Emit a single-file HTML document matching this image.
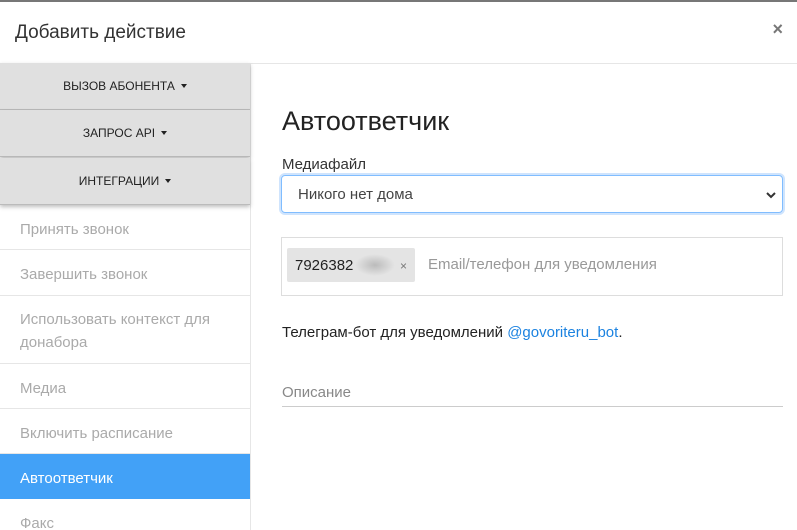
<!DOCTYPE html>
<html><head><meta charset="utf-8"><style>
*{box-sizing:border-box;margin:0;padding:0}
html,body{width:797px;height:530px;overflow:hidden}
body{background:#fff;font-family:"Liberation Sans","DejaVu Sans",sans-serif;position:relative;color:#212529}
.top{position:absolute;left:0;top:0;width:797px;height:2px;background:#777}
.h{position:absolute;left:15px;top:22px;font-size:19px;color:#333}
.x{position:absolute;right:14px;top:19px;font-size:18px;color:#777;font-weight:bold}
.hl{position:absolute;left:0;top:63px;width:797px;height:1px;background:#e6e6e6}
.side{position:absolute;left:0;top:64px;width:251px;height:466px;border-right:1px solid #e6e6e6}
.btn{position:absolute;left:0;width:250px;height:47px;background:#e0e0e0;border-bottom:1px solid #bbb;font-size:12px;text-align:center;line-height:46px;color:#222;z-index:2;box-shadow:0 2px 4px rgba(0,0,0,.25)}
.car{display:inline-block;border-left:3.5px solid transparent;border-right:3.5px solid transparent;border-top:4px solid #222;margin-left:6px;vertical-align:middle;position:relative;top:-1px}
.it{position:absolute;left:0;width:250px;border-bottom:1px solid #e6e6e6;padding-left:20px;font-size:15px;color:#aaa;line-height:23px}
.act{background:#42a1f7;color:#fff;border-color:#42a1f7}
.t{position:absolute;left:282px;top:106px;font-size:27px;color:#222}
.lab{position:absolute;left:282px;top:156px;font-size:15px;color:#333}
.sel{position:absolute;left:281px;top:175px;width:502px;height:38px;border:1px solid #80bdff;border-radius:4px;box-shadow:0 0 0 2px #cfe4fd;font-size:15px;padding-left:16px;line-height:38px;color:#444}
.chev{position:absolute;right:6px;top:15px}
.tag{position:absolute;left:281px;top:237px;width:502px;height:59px;border:1px solid #ddd}
.chip{position:absolute;left:5px;top:10px;width:128px;height:34px;background:#e4e4e4;border-radius:2px;font-size:15px;line-height:36px;padding-left:8px;color:#222}
.blur{position:absolute;left:68px;top:6px;width:40px;height:22px;background:radial-gradient(ellipse,#bbb 0%,#e4e4e4 70%)}
.cx{position:absolute;left:113px;top:0;font-size:12px;color:#777}
.ph{position:absolute;left:146px;top:18px;font-size:15px;color:#999}
.tg{position:absolute;left:282px;top:324px;font-size:15px;color:#222}
.tg span{color:#1b82e0}
.op{position:absolute;left:282px;top:384px;font-size:15px;color:#888}
.ol{position:absolute;left:282px;top:406px;width:501px;height:1px;background:#ccc}
</style></head><body>
<div class="top"></div>
<div class="h">Добавить действие</div>
<div class="x">×</div>
<div class="hl"></div>
<div class="side"></div>
<div class="btn" style="top:63px">ВЫЗОВ АБОНЕНТА<span class="car"></span></div>
<div class="btn" style="top:110px">ЗАПРОС API<span class="car"></span></div>
<div class="btn" style="top:158px">ИНТЕГРАЦИИ<span class="car"></span></div>
<div class="it" style="top:205px;height:45px;padding-top:13px">Принять звонок</div>
<div class="it" style="top:250px;height:46px;padding-top:13px">Завершить звонок</div>
<div class="it" style="top:296px;height:68px;padding-top:12px">Использовать контекст для<br>донабора</div>
<div class="it" style="top:364px;height:45px;padding-top:13px">Медиа</div>
<div class="it" style="top:409px;height:45px;padding-top:13px">Включить расписание</div>
<div class="it act" style="top:454px;height:45px;padding-top:13px">Автоответчик</div>
<div class="it" style="top:499px;height:31px;padding-top:13px;border-bottom:none">Факс</div>
<div class="t">Автоответчик</div>
<div class="lab">Медиафайл</div>
<div class="sel">Никого нет дома<svg class="chev" width="10" height="8" viewBox="0 0 10 8"><path d="M1 2l4 4 4-4" stroke="#333" stroke-width="2" fill="none"/></svg></div>
<div class="tag"><div class="chip">7926382<div class="blur"></div><span class="cx">×</span></div><div class="ph">Email/телефон для уведомления</div></div>
<div class="tg">Телеграм-бот для уведомлений <span>@govoriteru_bot</span>.</div>
<div class="op">Описание</div>
<div class="ol"></div>
</body></html>
